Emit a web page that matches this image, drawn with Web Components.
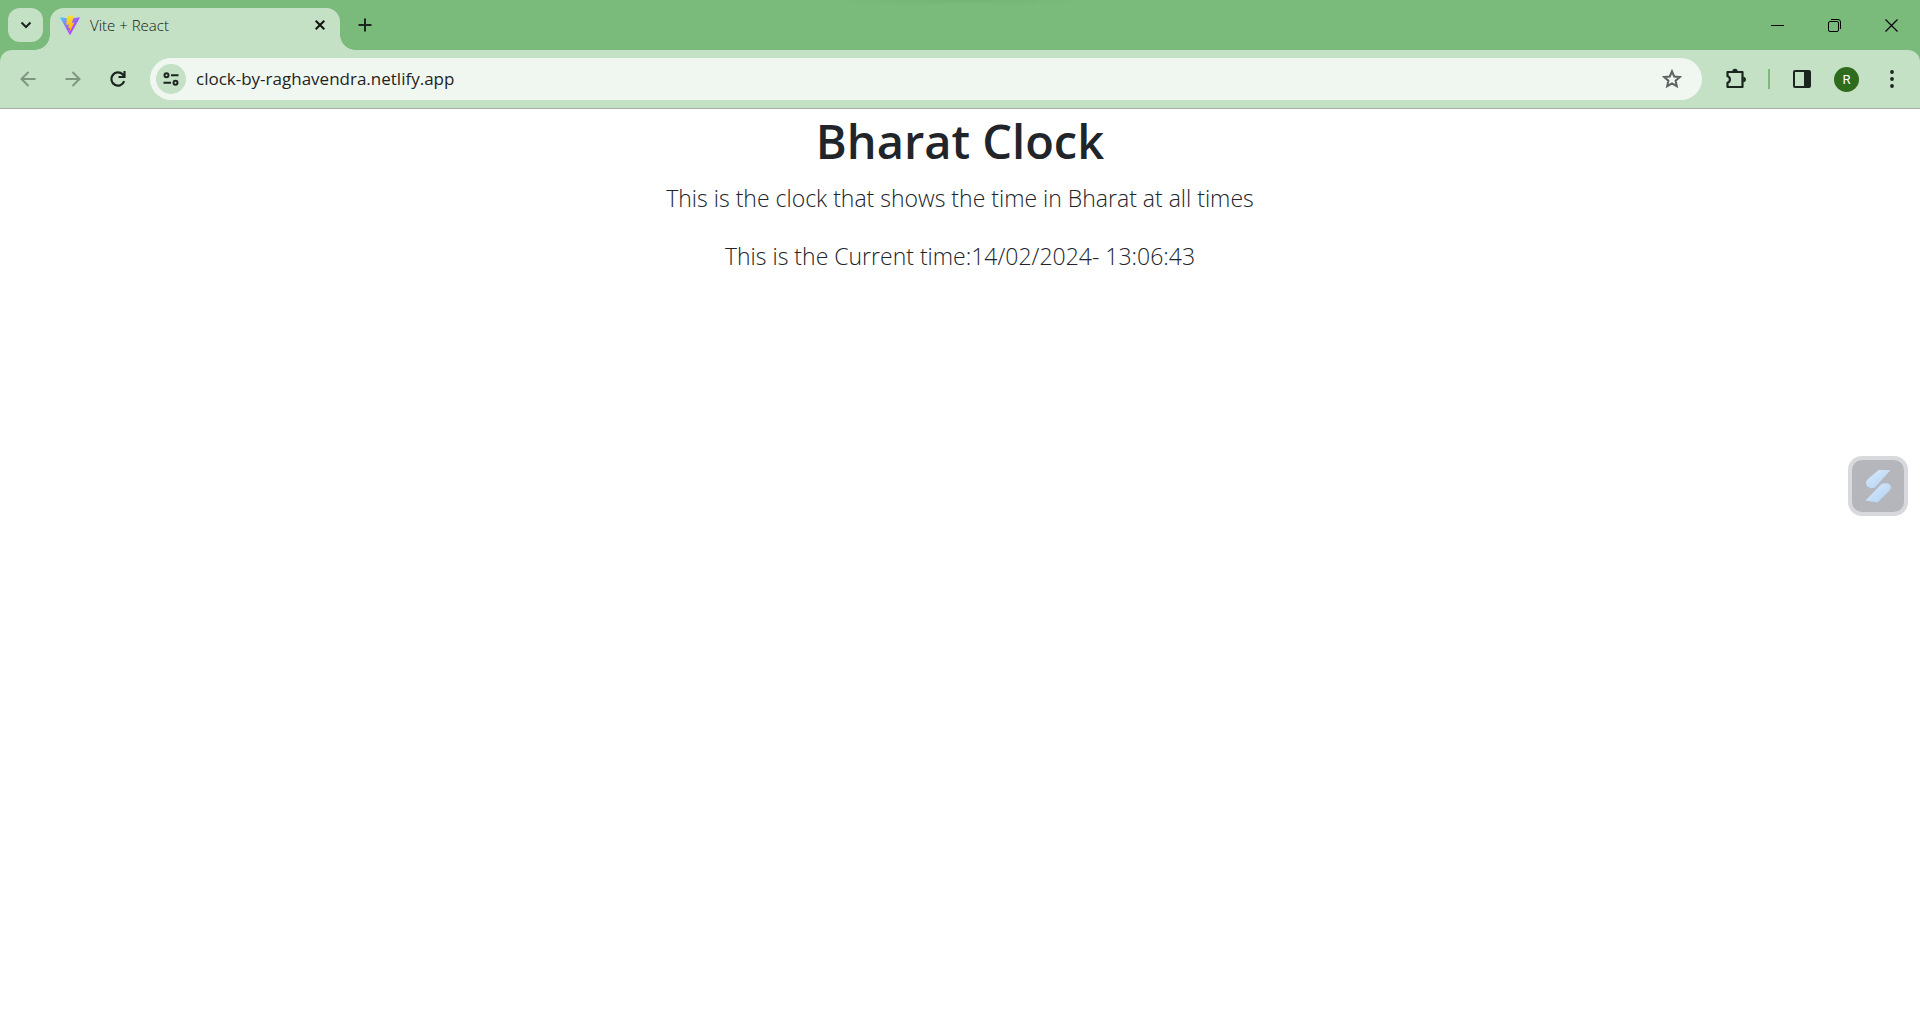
<!DOCTYPE html>
<html lang="en">
<head>
<meta charset="utf-8">
<title>Vite + React</title>
<style>
  html, body { margin: 0; background: #fff; }
  body { min-height: 100vh; font-family: "Open Sans", "Noto Sans", sans-serif; color: #212529; }
</style>
</head>
<body>
<browser-window>
  <tab-strip slot="tabs"><browser-tab>Vite + React</browser-tab></tab-strip>
  <browser-toolbar slot="toolbar" address="clock-by-raghavendra.netlify.app" initial="R"></browser-toolbar>
  <bharat-clock time="14/02/2024- 13:06:43"></bharat-clock>
</browser-window>
<floating-badge></floating-badge>

<script>
const buttonReset = `
  button { display: flex; align-items: center; justify-content: center; padding: 0; margin: 0; border: 0; background: none; color: inherit; font: inherit; }
  svg { display: block; flex: none; }
`;

function define(name, html, setup) {
  customElements.define(name, class extends HTMLElement {
    constructor() {
      super();
      this.attachShadow({ mode: "open" }).innerHTML = html;
    }
    connectedCallback() {
      if (setup) setup(this, this.shadowRoot);
    }
  });
}

define("browser-window", `
  <style>
    :host { display: flex; flex-direction: column; min-height: 100vh; }
    header { background: #7abb7c; color: #1c2420; }
    main { flex: 1; }
  </style>
  <header><slot name="tabs"></slot><slot name="toolbar"></slot></header>
  <main><slot></slot></main>
`);

define("tab-strip", `
  <style>
    ${buttonReset}
    :host { display: flex; height: 50px; background: radial-gradient(ellipse 150px 6px at 50% 0, #74b376, transparent); }
    .search { width: 35px; height: 34px; margin: 8px 7px 0 8px; border-radius: 12px; background: #c5e1c5; }
    .new { width: 50px; }
    .controls { display: flex; margin-left: auto; color: #000; }
    .controls button { width: 57px; }
  </style>
  <button class="search" aria-label="Search tabs"><svg width="12" height="8" viewBox="0 0 12 8"><path d="M1.500 1.500 6 6l4.500-4.500" fill="none" stroke="currentColor" stroke-width="2"/></svg></button>
  <slot></slot>
  <button class="new" aria-label="New tab"><svg width="14" height="14" viewBox="0 0 14 14"><path d="M7 .5v13M.5 7h13" stroke="currentColor" stroke-width="2"/></svg></button>
  <div class="controls">
    <button aria-label="Minimize"><svg width="13" height="13" viewBox="0 0 13 13"><path d="M0 6.500h13" stroke="currentColor"/></svg></button>
    <button aria-label="Restore"><svg width="13" height="13" viewBox="0 0 13 13" fill="none" stroke="currentColor"><rect x=".5" y="2.500" width="10" height="10" rx="1.500"/><path d="M3 .5h7a2.500 2.500 0 0 1 2.500 2.500v7"/></svg></button>
    <button aria-label="Close"><svg width="13" height="13" viewBox="0 0 13 13"><path d="m.5.500 12 12m0-12-12 12" stroke="currentColor" stroke-width="1.200"/></svg></button>
  </div>
`);

define("browser-tab", `
  <style>
    ${buttonReset}
    :host { display: flex; position: relative; align-items: center; box-sizing: border-box; width: 290px; height: 42px; margin-top: 8px; padding: 0 10px 8px; border-radius: 14px 14px 0 0; background: #c5e1c5; color: #10160f; font-size: 15px; font-weight: 300; line-height: 22px; }
    :host::before, :host::after { content: ""; position: absolute; bottom: 0; width: 15px; height: 15px; }
    :host::before { right: 100%; background: radial-gradient(circle at 0 0, transparent 14.500px, #c5e1c5 15px); }
    :host::after { left: 100%; background: radial-gradient(circle at 100% 0, transparent 14.500px, #c5e1c5 15px); }
    span { flex: 1; margin-left: 10px; }
    button { width: 20px; height: 20px; }
  </style>
  <svg width="20" height="20" viewBox="0 0 32 32">
    <defs>
      <linearGradient id="shield" x1="0" x2="1" y1="0" y2="1"><stop stop-color="#41d1ff"/><stop offset=".5" stop-color="#a259ff"/><stop offset="1" stop-color="#bd34fe"/></linearGradient>
      <linearGradient id="bolt" x1="0" x2="0" y1="0" y2="1"><stop stop-color="#ffdd35"/><stop offset="1" stop-color="#ffa800"/></linearGradient>
    </defs>
    <path fill="url(#shield)" d="M31.500 4.800 16.800 31a.9.9 0 0 1-1.600 0L.5 4.800a.9.9 0 0 1 .9-1.300L16 6l14.700-2.500a.9.9 0 0 1 .8 1.300z"/>
    <path fill="url(#bolt)" d="M22.500.4 11 2.400 10 15.500l4-.5-.8 6 3-.5-1.700 8.500 8.500-17-4 .6z"/>
  </svg>
  <span><slot></slot></span>
  <button aria-label="Close tab"><svg width="10" height="10" viewBox="0 0 10 10"><path d="m.7.700 8.600 8.600m0-8.600L.7 9.300" stroke="currentColor" stroke-width="2"/></svg></button>
`);

define("browser-toolbar", `
  <style>
    ${buttonReset}
    :host { display: flex; align-items: center; height: 58px; padding: 0 6px 0 5px; border-bottom: 1px solid #a3aea4; border-radius: 12px 12px 0 0; background: #c5e1c5; }
    button { width: 45px; height: 42px; }
    .muted { color: #7e967f; }
    form { display: flex; flex: 1; align-items: center; height: 42px; margin: 0 11px 0 10px; border-radius: 21px; background: #f0f7f1; }
    .site { width: 30px; height: 30px; margin: 0 10px 0 6px; border-radius: 50%; background: #c5e1c5; }
    input { flex: 1; min-width: 0; height: 32px; padding: 0; border: 0; outline: 0; background: none; color: #1f2421; font: 17px/32px "Open Sans", "Noto Sans", sans-serif; }
    .star { width: 60px; color: #5d6360; }
    i { width: 2px; height: 20px; margin: 0 9px 0 10px; background: #7abb7c; }
    b { width: 25px; border-radius: 50%; background: #2f6b1c; color: #fff; font: 13px/25px Roboto, sans-serif; text-align: center; }
  </style>
  <button class="muted" aria-label="Back"><svg width="16" height="16" viewBox="0 0 16 16" fill="none" stroke="currentColor" stroke-width="2"><path d="M15.500 8H2M8.500 1 1.500 8l7 7"/></svg></button>
  <button class="muted" aria-label="Forward"><svg width="16" height="16" viewBox="0 0 16 16" fill="none" stroke="currentColor" stroke-width="2"><path d="M.5 8H14M7.500 1l7 7-7 7"/></svg></button>
  <button aria-label="Reload"><svg width="18" height="18" viewBox="0 0 18 18" fill="none" stroke="currentColor" stroke-width="2.200"><path d="M15.200 11.200A6.600 6.600 0 1 1 13.800 4.500l2 2.300M15.500 1v6H9.500"/></svg></button>
  <form>
    <button class="site" type="button" aria-label="View site information"><svg width="16" height="14" viewBox="0 0 16 14" fill="none" stroke="#1c2420" stroke-width="2"><circle cx="3.500" cy="3.300" r="2"/><path d="M8 3.300h7.500M.5 10.700H8"/><circle cx="12.500" cy="10.700" r="2"/></svg></button>
    <input type="text" aria-label="Address">
    <button class="star" type="button" aria-label="Bookmark this tab"><svg width="20" height="20" viewBox="0 0 20 20" fill="none" stroke="currentColor" stroke-width="2"><path d="m10 2.300 2.200 5.200 5.600.5-4.200 3.700 1.200 5.500-4.800-2.900-4.800 2.900 1.200-5.500L2.200 8l5.600-.5z"/></svg></button>
  </form>
  <button aria-label="Extensions"><svg width="22" height="22" viewBox="0 0 22 22"><path d="M2.500 4h15v15h-15v-4.300c3.200-.8 3.200-5.600 0-6.400z" fill="none" stroke="currentColor" stroke-width="2.200" stroke-linejoin="round"/><path d="M7.300 3.500a2.700 2.700 0 0 1 5.400 0zM18.200 8.800a2.700 2.700 0 0 1 0 5.400z" fill="currentColor"/></svg></button>
  <i></i>
  <button aria-label="Side panel"><svg width="18" height="18" viewBox="0 0 18 18"><rect x="1" y="1" width="16" height="16" rx="1" fill="none" stroke="currentColor" stroke-width="2"/><path d="M11 1h6v16h-6z" fill="currentColor"/></svg></button>
  <button aria-label="Profile"><b></b></button>
  <button aria-label="Menu"><svg width="4" height="18" viewBox="0 0 4 18" fill="currentColor"><circle cx="2" cy="2" r="1.900"/><circle cx="2" cy="9" r="1.900"/><circle cx="2" cy="16" r="1.900"/></svg></button>
`, (host, root) => {
  root.querySelector("input").value = host.getAttribute("address");
  root.querySelector("b").textContent = host.getAttribute("initial");
});

define("bharat-clock", `
  <style>
    :host { display: block; text-align: center; }
    h1 { margin: 0 0 6px; font-size: 47px; font-weight: 600; line-height: 64px; }
    p { margin: 0 0 20px; font-size: 23px; font-weight: 300; line-height: 38px; }
  </style>
  <h1>Bharat Clock</h1>
  <p>This is the clock that shows the time in Bharat at all times</p>
  <p>This is the Current time:<time></time></p>
`, (host, root) => {
  root.querySelector("time").textContent = host.getAttribute("time");
});

define("floating-badge", `
  <style>
    ${buttonReset}
    :host { position: fixed; top: 456px; right: 12px; }
    button { box-sizing: border-box; width: 60px; height: 60px; border: 4px solid #d8d9dc; border-radius: 14px; background: #b5b6bc; }
  </style>
  <button aria-label="Open assistant"><svg width="28" height="34" viewBox="0 0 28 34">
    <defs><linearGradient id="ice" x1="0" x2="1" y1="0" y2="1"><stop stop-color="#dcebfa"/><stop offset="1" stop-color="#aed1f5"/></linearGradient></defs>
    <path fill="url(#ice)" d="M14.500 1h12L11 18.500c-4 1.500-9-.5-9-4.500 0-1.700 1-3 2-4z"/>
    <path fill="url(#ice)" d="M13.500 33.500 1.500 31.500 17 15.500c4-2.500 9.500-1.500 10 2.300.2 2-1 3.200-2 4.200z"/>
  </svg></button>
`);
</script>
</body>
</html>
